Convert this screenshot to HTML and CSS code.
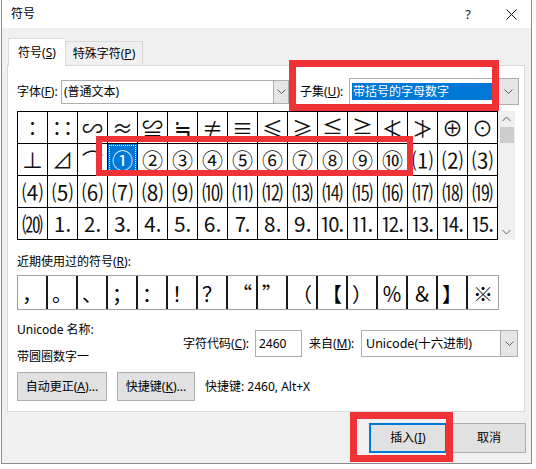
FILE: index.html
```html
<!DOCTYPE html>
<html lang="zh-CN">
<head>
<meta charset="utf-8">
<title>符号</title>
<link rel="stylesheet" href="styles.css">
</head>
<body>
<div class="dialog">
  <div class="titlebar">
    <span class="title">符号</span>
    <span class="help">?</span>
    <span class="close"><svg width="11" height="11" viewBox="0 0 11 11"><path d="M0.5 0.5 L10.5 10.5 M10.5 0.5 L0.5 10.5" stroke="#111" stroke-width="1" fill="none"/></svg></span>
  </div>
  <div class="body">
    <div class="tabs">
      <div class="tab active">符号(<u>S</u>)</div>
      <div class="tab">特殊字符(<u>P</u>)</div>
    </div>
    <div class="panel">
      <div class="font-row">
        <span class="lbl font-lbl">字体(<u>F</u>):</span>
        <div class="combo font-combo">
          <span class="val">(普通文本)</span>
          <span class="arrow"><svg width="9" height="6" viewBox="0 0 9 6"><path d="M0.5 0.5 L4.5 4.5 L8.5 0.5" stroke="#606060" fill="none"/></svg></span>
        </div>
        <span class="lbl subset-lbl">子集(<u>U</u>):</span>
        <div class="combo subset-combo">
          <span class="val"><span class="sel">带括号的字母数字</span></span>
          <span class="arrow"><svg width="9" height="6" viewBox="0 0 9 6"><path d="M0.5 0.5 L4.5 4.5 L8.5 0.5" stroke="#606060" fill="none"/></svg></span>
        </div>
      </div>

      <div class="grid-wrap">
        <div class="grid">
          <span class="cell">∶</span><span class="cell">∷</span><span class="cell">∽</span><span class="cell">≈</span><span class="cell">≌</span><span class="cell">≒</span><span class="cell">≠</span><span class="cell">≡</span><span class="cell">≤</span><span class="cell">≥</span><span class="cell">≦</span><span class="cell">≧</span><span class="cell">≮</span><span class="cell">≯</span><span class="cell">⊕</span><span class="cell">⊙</span>
          <span class="cell">⊥</span><span class="cell">⊿</span><span class="cell">⌒</span><span class="cell selected"><span class="focus">①</span></span><span class="cell">②</span><span class="cell">③</span><span class="cell">④</span><span class="cell">⑤</span><span class="cell">⑥</span><span class="cell">⑦</span><span class="cell">⑧</span><span class="cell">⑨</span><span class="cell">⑩</span><span class="cell">⑴</span><span class="cell">⑵</span><span class="cell">⑶</span>
          <span class="cell">⑷</span><span class="cell">⑸</span><span class="cell">⑹</span><span class="cell">⑺</span><span class="cell">⑻</span><span class="cell">⑼</span><span class="cell">⑽</span><span class="cell">⑾</span><span class="cell">⑿</span><span class="cell">⒀</span><span class="cell">⒁</span><span class="cell">⒂</span><span class="cell">⒃</span><span class="cell">⒄</span><span class="cell">⒅</span><span class="cell">⒆</span>
          <span class="cell">⒇</span><span class="cell">⒈</span><span class="cell">⒉</span><span class="cell">⒊</span><span class="cell">⒋</span><span class="cell">⒌</span><span class="cell">⒍</span><span class="cell">⒎</span><span class="cell">⒏</span><span class="cell">⒐</span><span class="cell">⒑</span><span class="cell">⒒</span><span class="cell">⒓</span><span class="cell">⒔</span><span class="cell">⒕</span><span class="cell">⒖</span>
        </div>
        <div class="scrollbar">
          <span class="sb-btn"><svg width="9" height="6" viewBox="0 0 9 6"><path d="M0.5 5 L4.5 1 L8.5 5" stroke="#606060" fill="none"/></svg></span>
          <span class="sb-thumb"></span>
          <span class="sb-space"></span>
          <span class="sb-btn"><svg width="9" height="6" viewBox="0 0 9 6"><path d="M0.5 1 L4.5 5 L8.5 1" stroke="#606060" fill="none"/></svg></span>
        </div>
      </div>

      <div class="recent-lbl">近期使用过的符号(<u>R</u>):</div>
      <div class="recent">
        <span class="rcell">，</span><span class="rcell">。</span><span class="rcell">、</span><span class="rcell">；</span><span class="rcell">：</span><span class="rcell">！</span><span class="rcell">？</span><span class="rcell">“</span><span class="rcell">”</span><span class="rcell">（</span><span class="rcell">【</span><span class="rcell">）</span><span class="rcell">％</span><span class="rcell">＆</span><span class="rcell">】</span><span class="rcell">※</span>
      </div>

      <div class="info">
        <div class="info-left">
          <div>Unicode 名称:</div>
          <div>带圆圈数字一</div>
        </div>
        <div class="info-right">
          <span class="lbl code-lbl">字符代码(<u>C</u>):</span>
          <span class="input code-input">2460</span>
          <span class="lbl from-lbl">来自(<u>M</u>):</span>
          <div class="combo from-combo">
            <span class="val">Unicode(十六进制)</span>
            <span class="arrow"><svg width="9" height="6" viewBox="0 0 9 6"><path d="M0.5 0.5 L4.5 4.5 L8.5 0.5" stroke="#606060" fill="none"/></svg></span>
          </div>
        </div>
      </div>

      <div class="btn-row">
        <span class="btn btn-auto">自动更正(<u>A</u>)...</span>
        <span class="btn btn-key">快捷键(<u>K</u>)...</span>
        <span class="shortcut">快捷键: 2460, Alt+X</span>
      </div>
    </div>
    <div class="footer">
      <span class="btn btn-insert">插入(<u>I</u>)</span>
      <span class="btn btn-cancel">取消</span>
    </div>
  </div>
</div>
<div class="redbox rb1"></div>
<div class="redbox rb2"></div>
<div class="redbox rb3"></div>
</body>
</html>
```

FILE: styles.css
```css
* { box-sizing: border-box; }
html, body { margin: 0; padding: 0; background: #fff; }
body {
  width: 536px;
  height: 469px;
  overflow: hidden;
  position: relative;
  font-family: "Noto Sans", "Noto Sans CJK SC", sans-serif;
  font-size: 12px;
  line-height: 16px;
  color: #000;
}
u { text-decoration: underline; text-underline-offset: 1px; }

.dialog {
  margin-left: 1px;
  width: 531px;
  height: 464px;
  border: 1px solid #8c8c8c;
  border-top: none;
  display: flex;
  flex-direction: column;
}

.titlebar {
  height: 28px;
  flex: none;
  background: #fff;
  display: flex;
  align-items: center;
  padding-left: 9px;
}
.title { flex: 1; font-size: 12px; }
.help { width: 46px; text-align: center; font-size: 13px; color: #111; }
.close { width: 40px; display: flex; justify-content: center; align-items: center; }

.body {
  flex: 1;
  background: #f0f0f0;
  padding: 10px 0 0 5px;
  display: flex;
  flex-direction: column;
}

.tabs {
  height: 27px;
  display: flex;
  align-items: flex-end;
  padding-left: 1px;
}
.tab {
  height: 24px;
  width: 78px;
  border: 1px solid #d9d9d9;
  border-bottom: none;
  background: #f0f0f0;
  text-align: center;
  line-height: 23px;
}
.tab.active {
  width: 57px;
  height: 28px;
  margin-bottom: -1px;
  background: #fff;
  position: relative;
  z-index: 1;
  line-height: 27px;
  border-right: none;
}

.panel {
  width: 518px;
  height: 347px;
  background: #fff;
  border: 1px solid #d9d9d9;
  padding: 12px 0 0 9px;
}

.font-row {
  height: 27px;
  display: flex;
  align-items: center;
}
.lbl { white-space: nowrap; }
.font-lbl { width: 44px; }
.combo {
  display: flex;
  align-items: stretch;
  border: 1px solid #adadad;
  background: #fff;
}
.combo .val {
  flex: 1;
  display: flex;
  align-items: center;
  padding-left: 2px;
  white-space: nowrap;
  overflow: hidden;
}
.combo .arrow {
  width: 15px;
  background: #e5e5e5;
  border-left: 1px solid #adadad;
  display: flex;
  align-items: center;
  justify-content: center;
}
.font-combo { width: 228px; height: 24px; }
.subset-lbl { margin-left: 11px; width: 49px; }
.subset-combo { width: 170px; height: 27px; }
.subset-combo .arrow { width: 20px; }
.sel {
  display: block;
  background: #0078d7;
  color: #fff;
  width: 145px;
  line-height: 17px;
  padding-left: 1px;
}

.grid-wrap {
  margin-top: 6px;
  display: flex;
  height: 129px;
}
.grid {
  display: grid;
  grid-template-columns: repeat(16, 30px);
  grid-auto-rows: 32px;
  border-left: 1px solid #000;
  border-top: 1px solid #000;
  font-family: "Noto Sans CJK SC", sans-serif;
}
.cell {
  border-right: 1px solid #000;
  border-bottom: 1px solid #000;
  display: flex;
  align-items: center;
  justify-content: center;
  font-size: 21px;
  line-height: 1;
  color: #111;
}
.cell.selected {
  background: #0078d7;
  color: #fff;
  padding: 1px;
}
.focus {
  width: 100%;
  height: 100%;
  border: 1px dotted #fff;
  display: flex;
  align-items: center;
  justify-content: center;
}
.scrollbar {
  width: 17px;
  background: #f0f0f0;
  display: flex;
  flex-direction: column;
  align-items: center;
}
.sb-btn {
  height: 16px;
  width: 100%;
  display: flex;
  align-items: center;
  justify-content: center;
}
.sb-thumb {
  width: 14px;
  height: 16px;
  background: #cdcdcd;
}
.sb-space { flex: 1; }

.recent-lbl {
  margin-top: 14px;
  line-height: 16px;
}
.recent {
  margin-top: 5px;
  display: grid;
  grid-template-columns: repeat(16, 30px);
  height: 35px;
  width: 482px;
  border: 1px solid #a0a0a0;
  font-family: "Noto Sans CJK SC", sans-serif;
}
.rcell {
  border-right: 2px solid #1a1a1a;
  display: flex;
  align-items: center;
  justify-content: center;
  font-size: 20px;
  line-height: 1;
  padding-top: 3px;
}
.rcell:last-child { border-right: none; }

.info {
  margin-top: 12px;
  display: flex;
  align-items: center;
}
.info-left {
  width: 166px;
  display: flex;
  flex-direction: column;
  gap: 11px;
}
.info-right {
  display: flex;
  align-items: center;
}
.code-lbl { width: 72px; }
.input {
  height: 27px;
  border: 1px solid #adadad;
  display: flex;
  align-items: center;
  padding-left: 3px;
}
.code-input { width: 47px; }
.from-lbl { margin-left: 7px; width: 52px; }
.from-combo { width: 157px; height: 27px; }
.from-combo .val { padding-left: 4px; font-size: 12.5px; }
.from-combo .arrow { width: 17px; }

.btn-row {
  margin-top: 7px;
  display: flex;
  align-items: center;
}
.btn {
  height: 29px;
  background: #e1e1e1;
  border: 1px solid #adadad;
  display: flex;
  align-items: center;
  justify-content: center;
  white-space: nowrap;
}
.btn-auto { width: 90px; }
.btn-key { width: 78px; margin-left: 10px; }
.shortcut { margin-left: 10px; }

.footer {
  flex: 1;
  display: flex;
  justify-content: flex-end;
  align-items: flex-start;
  gap: 5px;
  padding: 11px 5px 0 0;
}
.btn-insert {
  width: 78px;
  height: 30px;
  border: 2px solid #0078d7;
}
.btn-cancel {
  width: 74px;
  height: 30px;
}

.redbox {
  position: absolute;
  border-style: solid;
  border-color: #ee3237;
}
.rb1 { left: 289px; top: 60px; width: 210px; height: 51px; border-width: 7px; }
.rb2 { left: 96px; top: 136px; width: 317px; height: 40px; border-width: 6px; }
.rb3 { left: 350px; top: 412px; width: 103px; height: 50px; border-width: 7px; }
```
